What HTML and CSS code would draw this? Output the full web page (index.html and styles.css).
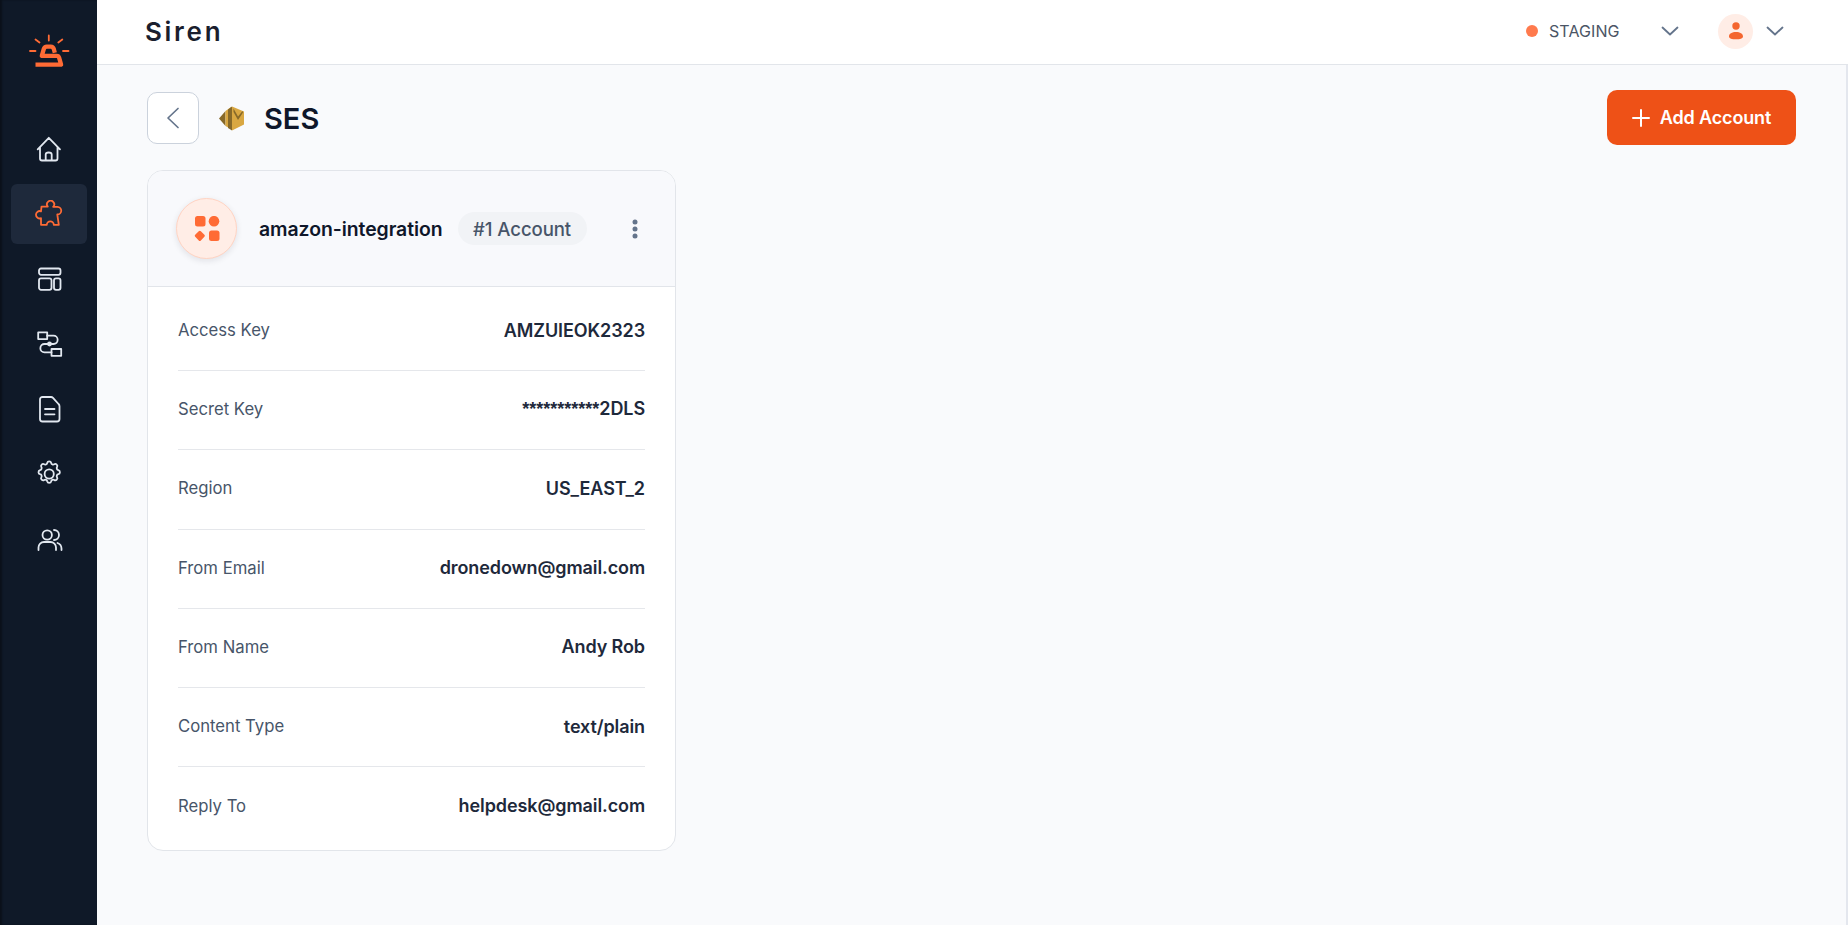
FILE: index.html
```html
<!DOCTYPE html>
<html lang="en">
<head>
<meta charset="utf-8">
<title>Siren</title>
<link rel="stylesheet" href="styles.css">
</head>
<body>
<div class="app">
  <aside class="sidebar">
    <div class="logo">
      <svg width="42" height="36" viewBox="28 34 42 36" fill="none" stroke="#ff6b35" stroke-linecap="round" stroke-linejoin="round">
        <path stroke-width="1.800" d="M48.800 35.500v5M35.500 39.500l4 3M62.300 39.500l-4 3M30 51h5.500M63 51h5.500"/>
        <path stroke-width="4.300" stroke-linecap="butt" d="M54.800 52.800l-1-3.800q-.7-2.300-3-2.300h-4q-2.300 0-3 2.300l-2 6.900h15q1.800 0 2.300 1.800l2 7H35.500"/>
      </svg>
    </div>
    <nav class="nav">
      <a class="nav-item"><svg class="ico" viewBox="0 0 28 28"><path d="M2.700 14.300 13.800 2.800 25 14.300M5 12v11.500a2 2 0 0 0 2 2h13.500a2 2 0 0 0 2-2V12M10.700 25.500v-6a3 2 0 0 1 6 0v6"/></svg></a>
      <a class="nav-item active"><svg class="ico" viewBox="0 0 28 28"><path d="M6.500 6.600H12.800A3.600 3.600 0 1 1 18.200 6.800L22.500 6.800A3.600 3.600 0 0 1 22.300 14.500L23.800 24.800H18.800A3.500 3.500 0 0 0 11.800 24.800H6V18.200A3.700 3.700 0 1 1 6 11.300z"/></svg></a>
      <a class="nav-item"><svg class="ico" viewBox="0 0 28 28"><rect x="4" y="3.500" width="21.500" height="6.300" rx="2"/><rect x="4" y="13.300" width="12.500" height="11.500" rx="2"/><rect x="19" y="13.300" width="6.500" height="11.500" rx="2"/></svg></a>
      <a class="nav-item"><svg class="ico" viewBox="0 0 28 28"><rect x="3.200" y="2.300" width="9" height="6.800"/><rect x="16.500" y="19" width="9.700" height="6.800"/><path d="M12.200 5.700H18.500a4.150 4.150 0 0 1 0 8.300H9.500a4.150 4.150 0 0 0 0 8.300H16.500"/><circle cx="14.500" cy="14" r="1.500"/></svg></a>
      <a class="nav-item"><svg class="ico" viewBox="0 0 28 28"><path d="M7.500 2h8.500c.8 0 1.500.3 2 .8l5.500 6.200c.6.6 1 1.300 1 2.200V24a2.500 2.500 0 0 1-2.500 2.500H7.500A2.500 2.500 0 0 1 5 24V4.500A2.500 2.500 0 0 1 7.500 2zM10 14h9.500M10 19.300h9.500"/></svg></a>
      <a class="nav-item"><svg class="ico" viewBox="0 0 28 28"><path transform="translate(14.200 14) scale(1.170) translate(-12 -12)" d="M10.300 2.600c.4-1.800 3-1.800 3.400 0a1.700 1.700 0 0 0 2.600 1.100c1.500-1 3.400.9 2.400 2.400a1.700 1.700 0 0 0 1.100 2.600c1.800.4 1.800 3 0 3.400a1.700 1.700 0 0 0-1.100 2.600c1 1.500-.9 3.400-2.400 2.400a1.700 1.700 0 0 0-2.600 1.100c-.4 1.800-3 1.800-3.400 0a1.700 1.700 0 0 0-2.600-1.100c-1.500 1-3.400-.9-2.400-2.400a1.700 1.700 0 0 0-1.100-2.600c-1.800-.4-1.800-3 0-3.400a1.700 1.700 0 0 0 1.100-2.600c-1-1.500.9-3.400 2.400-2.400a1.700 1.700 0 0 0 2.600-1.100z"/><circle cx="14.200" cy="14" r="4.600"/></svg></a>
      <a class="nav-item"><svg class="ico" viewBox="0 0 28 28"><circle cx="12.200" cy="10" r="4.700"/><path d="M3.500 25v-2.500a5.500 5.500 0 0 1 5.500-5.500h6.500a5.500 5.500 0 0 1 5.500 5.500V25M19 5a5 5 0 0 1 0 10M22.500 18a6 6 0 0 1 4 5.500V25"/></svg></a>
    </nav>
  </aside>
  <div class="main">
    <header class="topbar">
      <div class="brand">Siren</div>
      <div class="top-actions">
        <span class="dot"></span>
        <span class="env">STAGING</span>
        <svg class="chev chev-env" viewBox="0 0 18 10"><path d="M1.500 1.500 9 8.500l7.500-7"/></svg>
        <span class="avatar">
          <svg width="16" height="18" viewBox="0 0 16 18" fill="#f4662f"><circle cx="8" cy="4" r="3.700"/><path d="M1 14.500c0-3 3-4.500 7-4.500s7 1.500 7 4.500c0 2-3 2.800-7 2.800s-7-.8-7-2.800z"/></svg>
        </span>
        <svg class="chev chev-user" viewBox="0 0 18 10"><path d="M1.500 1.500 9 8.500l7.500-7"/></svg>
      </div>
    </header>
    <main class="content">
      <div class="page-head">
        <div class="page-title">
          <button class="back"><svg width="14" height="22" viewBox="0 0 14 22" fill="none" stroke="#64748b" stroke-width="1.700" stroke-linecap="round" stroke-linejoin="round"><path d="M12 1.500 2 11l10 9.500"/></svg></button>
          <svg class="ses" width="26" height="25" viewBox="0 0 26 25"><path fill="#876929" d="M0 12.500 6.500 5v15z"/><path fill="#d9a741" d="M6.500 5 12 1v22l-5.500-3z"/><path fill="#876929" d="M9 3.500 13 .5v24l-4-2.500z"/><path fill="#d9a741" d="M13 .5 25 5.500v13L13 24.500z"/><path fill="#876929" d="M14.500 2.500 19 10.500l4.500-5.500.5 1.500-5 7.500-4.500-8z"/></svg>
          <h1>SES</h1>
        </div>
        <button class="add"><svg width="18" height="18" viewBox="0 0 18 18" stroke="#fff" stroke-width="2" stroke-linecap="round"><path d="M9 1v16M1 9h16"/></svg>Add Account</button>
      </div>
      <section class="card">
        <div class="card-head">
          <span class="badge">
            <svg width="26" height="26" viewBox="0 0 26 26" fill="#ff6b35"><rect x="1" y="0" width="10.500" height="10.500" rx="2.500"/><circle cx="20" cy="5.200" r="5.300"/><rect x="1.800" y="15.800" width="8" height="8" rx="1.500" transform="rotate(45 5.800 19.800)"/><rect x="15" y="14.500" width="10.500" height="10.500" rx="2.500"/></svg>
          </span>
          <span class="name">amazon-integration</span>
          <span class="pill">#1 Account</span>
          <svg class="kebab" width="6" height="20" viewBox="0 0 6 20" fill="#64748b"><circle cx="3" cy="3" r="2.500"/><circle cx="3" cy="10" r="2.500"/><circle cx="3" cy="17" r="2.500"/></svg>
        </div>
        <div class="rows">
          <div class="row"><span class="label">Access Key</span><span class="value">AMZUIEOK2323</span></div>
          <div class="row"><span class="label">Secret Key</span><span class="value"><span class="mask">***********</span>2DLS</span></div>
          <div class="row"><span class="label">Region</span><span class="value">US_EAST_2</span></div>
          <div class="row"><span class="label">From Email</span><span class="value">dronedown@gmail.com</span></div>
          <div class="row"><span class="label">From Name</span><span class="value">Andy Rob</span></div>
          <div class="row"><span class="label">Content Type</span><span class="value">text/plain</span></div>
          <div class="row"><span class="label">Reply To</span><span class="value">helpdesk@gmail.com</span></div>
        </div>
      </section>
    </main>
  </div>
</div>
</body>
</html>
```
FILE: styles.css
```css
* { box-sizing: border-box; }
html, body { margin: 0; height: 100%; overflow: hidden; }
body { font-family: Inter, "Liberation Sans", sans-serif; color: #0f172a; background: #f9fafc; }
.app { display: flex; height: 925px; }

.sidebar { width: 97px; flex: none; background: #0f1928; box-shadow: inset 2px 0 2px rgba(0, 0, 0, .35); }
.logo { height: 119px; display: flex; justify-content: center; padding-top: 34px; }
.logo svg { display: block; }
.nav { display: flex; flex-direction: column; gap: 5px; padding: 0 10px 0 11px; }
.nav-item { height: 60px; border-radius: 6px; display: flex; align-items: center; justify-content: center; color: #e2e8f0; }
.nav-item.active { background: #1e293b; color: #ff6b35; }
.ico { width: 28px; height: 28px; margin-left: -1px; fill: none; stroke: currentColor; stroke-width: 1.800; stroke-linecap: round; stroke-linejoin: round; }
.ico path, .ico rect, .ico circle { vector-effect: non-scaling-stroke; }

.main { flex: 1; min-width: 0; display: flex; flex-direction: column; border-right: 2px solid #e4e7ee; }
.topbar { height: 65px; flex: none; background: #fff; border-bottom: 1px solid #e2e5ea; display: flex; align-items: center; justify-content: space-between; padding: 0 0 2px 48px; margin-right: -2px; }
.brand { font-size: 26px; font-weight: 600; letter-spacing: 2.700px; color: #1a1e2e; }
.top-actions { display: flex; align-items: center; }
.dot { width: 12px; height: 12px; border-radius: 50%; background: #ff7a4d; margin-right: 11px; }
.env { font-size: 16px; color: #4b5565; width: 112px; letter-spacing: .1px; }
.chev { width: 18px; height: 10px; fill: none; stroke: #64748b; stroke-width: 1.800; stroke-linecap: round; stroke-linejoin: round; }
.chev-env { margin-right: 39px; }
.avatar { width: 35px; height: 35px; border-radius: 50%; background: #ffede6; display: flex; align-items: center; justify-content: center; margin-right: 13px; }
.chev-user { margin-right: 64px; }

.content { flex: 1; padding: 25px 50px 0 50px; }
.page-head { display: flex; align-items: flex-start; justify-content: space-between; }
.page-title { display: flex; align-items: center; margin-top: 2px; }
.back { width: 52px; height: 52px; border-radius: 10px; background: #fff; border: 1px solid #cbd2dc; padding: 0; display: flex; align-items: center; justify-content: center; margin-right: 20px; }
.ses { margin-right: 19px; }
h1 { margin: 0; font-size: 29px; font-weight: 600; color: #0f172a; }
.add { height: 55px; width: 189px; border: 0; border-radius: 10px; background: #ee5117; color: #fff; font: 600 18px Inter, "Liberation Sans", sans-serif; letter-spacing: -.15px; display: flex; align-items: center; justify-content: center; gap: 10px; }

.card { width: 529px; margin-top: 25px; height: 681px; background: #fff; border: 1px solid #e2e5ea; border-radius: 16px; overflow: hidden; }
.card-head { height: 116px; background: #f8f9fc; border-bottom: 1px solid #e2e5ea; display: flex; align-items: center; padding: 0 37px 0 28px; }
.badge { width: 61px; height: 61px; flex: none; border-radius: 50%; background: #ffede6; border: 1px solid #ffd3c2; box-shadow: 0 2px 6px rgba(15, 23, 42, .1); display: flex; align-items: center; justify-content: center; margin-right: 22px; }
.name { font-size: 19.400px; font-weight: 600; color: #0f172a; margin-right: 15px; letter-spacing: -.05px; }
.pill { height: 33px; padding: 0 15.500px; border-radius: 17px; background: #f1f3f6; display: flex; align-items: center; font-size: 18.600px; font-weight: 500; color: #475569; letter-spacing: -.1px; }
.kebab { margin-left: auto; }

.rows { padding: 5px 30px 3px; }
.row { height: 79.200px; padding-bottom: 2px; display: flex; align-items: center; justify-content: space-between; border-bottom: 1px solid #e5e7eb; }
.row:last-child { border-bottom: 0; padding-bottom: 2px; }
.label { font-size: 16.700px; color: #475569; }
.value { font-size: 18px; font-weight: 600; color: #1e293b; letter-spacing: -.1px; }
.mask { font-family: "Liberation Sans", sans-serif; font-weight: 700; letter-spacing: 0; }
```
